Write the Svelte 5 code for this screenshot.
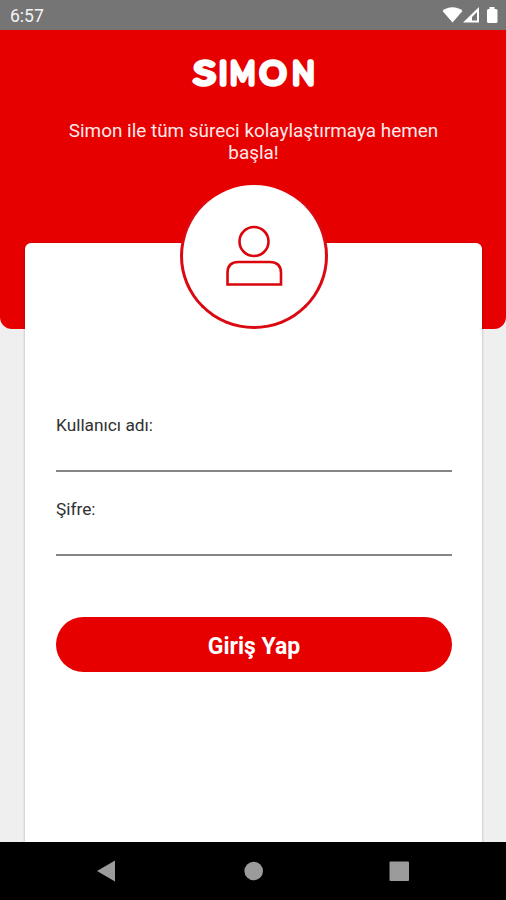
<script lang="ts">
	let username = '';
	let password = '';

	// centre and horizontal stretch of each wordmark letter
	const letters = [
		{ char: 'S', x: 16.5, stretch: 1.27 },
		{ char: 'I', x: 35.2, stretch: 0.95 },
		{ char: 'M', x: 54.7, stretch: 0.88 },
		{ char: 'O', x: 85, stretch: 1.06 },
		{ char: 'N', x: 115.5, stretch: 0.93 }
	];
</script>

<div class="screen">
	<div class="status">
		<span>6:57</span>
		<svg width="58" height="30" viewBox="0 0 58 30" fill="#fff">
			<path d="M2.500 11C7.500 6 17.500 6 22.500 11L12.500 22.500Z" />
			<path fill-rule="evenodd" d="M23 22.500L39 7V22.500ZM32 17V20.500H37V12Z" />
			<path d="M49.500 7H54.500V9H56Q57.500 9 57.500 10.500V21.500Q57.500 23 56 23H48.500Q47 23 47 21.500V10.500Q47 9 48.500 9H49.500Z" />
		</svg>
	</div>

	<main>
		<header>
			<svg class="logo" width="150" height="56" viewBox="-10 -10 150 56">
				{#each letters as { char, x, stretch }}
					<text transform="translate({x} 29.300) scale({stretch} 1)">{char}</text>
				{/each}
			</svg>
			<p>Simon ile tüm süreci kolaylaştırmaya hemen başla!</p>
		</header>

		<form class="card" on:submit|preventDefault>
			<div class="avatar">
				<svg width="60" height="64" viewBox="0 0 60 64" fill="none" stroke="#d9060d" stroke-width="2.6">
					<circle cx="30" cy="17.500" r="14.500" />
					<path d="M3.500 60.500V49Q3.500 38 14.500 38H45.500Q57 38 57 49V60.500Z" />
				</svg>
			</div>
			<label>
				<span>Kullanıcı adı:</span>
				<input type="text" bind:value={username} />
			</label>
			<label>
				<span>Şifre:</span>
				<input type="password" bind:value={password} />
			</label>
			<button>Giriş Yap</button>
		</form>
	</main>

	<nav>
		<svg width="506" height="58" viewBox="0 0 506 58" fill="#9b9b9b">
			<path d="M97 29L115 18.500V39.500Z" />
			<circle cx="253.700" cy="29" r="9.300" />
			<rect x="389.500" y="19.500" width="19.500" height="19.500" rx="1" />
		</svg>
	</nav>
</div>

<style>
	:global(body) {
		margin: 0;
	}

	.screen {
		display: flex;
		flex-direction: column;
		width: 506px;
		height: 900px;
		overflow: hidden;
		background: #efefef;
		font-family: Roboto, sans-serif;
	}

	.status {
		display: flex;
		flex: none;
		justify-content: space-between;
		align-items: center;
		box-sizing: border-box;
		height: 30px;
		padding: 0 8px 0 10px;
		background: #757575;
		color: #f4f4f4;
		font-size: 17.5px;
	}

	.status span {
		padding-top: 2px;
	}

	main {
		flex: 1;
		min-height: 0;
		display: flex;
		flex-direction: column;
	}

	header {
		flex: none;
		box-sizing: border-box;
		height: 299px;
		padding-top: 15px;
		border-radius: 0 0 12px 12px;
		background: #e60000;
		text-align: center;
	}

	.logo {
		display: block;
		margin: 0 auto;
	}

	.logo text {
		font-family: Lato, sans-serif;
		font-size: 31px;
		font-weight: 300;
		text-anchor: middle;
		fill: #fff;
		stroke: #fff;
		stroke-width: 5.5px;
		stroke-linejoin: round;
	}

	header p {
		width: 400px;
		margin: 19px auto 0;
		padding-left: 1px;
		color: #ffe9e9;
		font-size: 18.9px;
		line-height: 22px;
	}

	.card {
		position: relative;
		flex: 1;
		display: flex;
		flex-direction: column;
		margin: -86px 24px 0 25px;
		padding: 172px 30px 0 31px;
		border-radius: 6px 6px 0 0;
		background: #fff;
		box-shadow: 0 1px 3px rgba(0, 0, 0, 0.28);
	}

	.avatar {
		position: absolute;
		top: -60px;
		left: 155px;
		display: flex;
		justify-content: center;
		align-items: center;
		box-sizing: border-box;
		width: 148px;
		height: 146px;
		border: 3px solid #db0a12;
		border-top: 2px solid #e60000;
		border-radius: 50%;
		background: #fff;
	}

	label {
		display: flex;
		flex-direction: column;
		height: 84px;
		color: #303030;
		font-size: 17.3px;
		line-height: 21px;
	}

	input {
		height: 36px;
		box-sizing: border-box;
		padding: 0;
		border: 0;
		border-bottom: 2px solid #858585;
		outline: none;
		background: none;
		font: inherit;
	}

	button {
		height: 55px;
		margin-top: 34px;
		padding: 3px 0 0;
		border: 0;
		border-radius: 28px;
		background: #e60000;
		color: #fff;
		font-family: inherit;
		font-size: 23px;
		font-weight: 700;
	}

	nav {
		flex: none;
		height: 58px;
		background: #000;
	}
</style>
